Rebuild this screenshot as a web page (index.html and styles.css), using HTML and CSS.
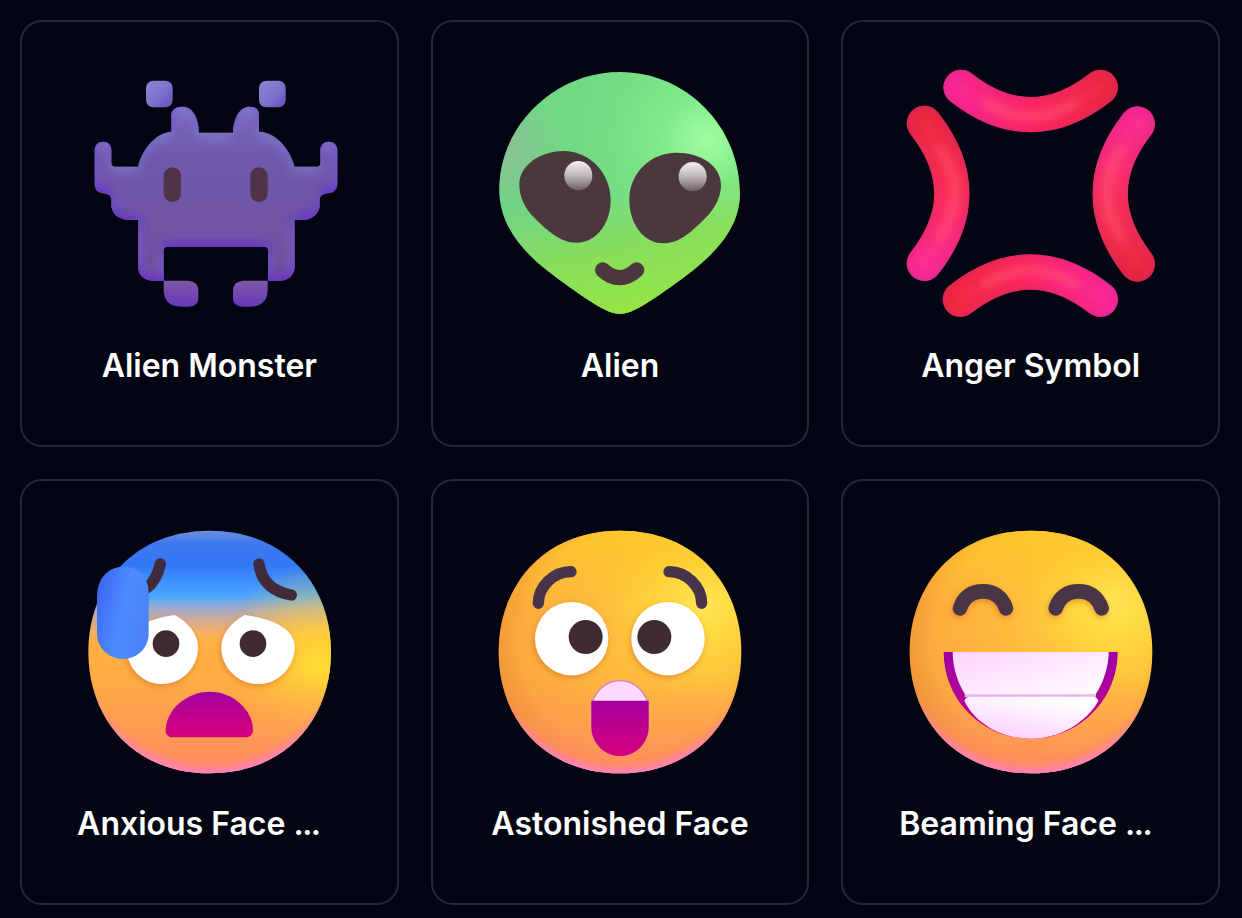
FILE: index.html
```html
<!DOCTYPE html>
<html lang="en">
<head>
<meta charset="utf-8">
<title>Emoji</title>
<link rel="stylesheet" href="styles.css">
</head>
<body>
<svg class="defs" aria-hidden="true">
  <defs>
    <path id="face" d="M16 30C24.7 30 30 23.8 30 16C30 8.2 24.7 2 16 2C7.3 2 2 8.2 2 16C2 23.8 7.3 30 16 30Z"/>
    <path id="alienShape" d="M600 216C800 216 960 380 960 580C960 700 860 785 760 855C700 897 640 942 600 942C560 942 500 897 440 855C340 785 238 700 238 570C238 380 400 216 600 216Z"/>
    <radialGradient id="faceBase" cx="0.84" cy="0.27" r="1">
      <stop offset="0" stop-color="#ffe95c"/><stop offset="0.16" stop-color="#ffd93f"/><stop offset="0.42" stop-color="#ffbc3d"/><stop offset="0.8" stop-color="#fbaa3e"/><stop offset="1" stop-color="#f39a40"/>
    </radialGradient>
    <linearGradient id="faceTop" x1="0" y1="0" x2="0" y2="1">
      <stop offset="0" stop-color="#ffc92b" stop-opacity="0.95"/><stop offset="0.32" stop-color="#ffc52c" stop-opacity="0"/>
    </linearGradient>
    <linearGradient id="faceLow" x1="0" y1="0.6" x2="0" y2="1">
      <stop offset="0" stop-color="#ff8f5c" stop-opacity="0"/><stop offset="1" stop-color="#ff8668" stop-opacity="0.85"/>
    </linearGradient>
    <radialGradient id="facePink" cx="0.5" cy="0.42" r="0.59">
      <stop offset="0.9" stop-color="#ff7e9e" stop-opacity="0"/><stop offset="1" stop-color="#ff7fe0"/>
    </radialGradient>
    <radialGradient id="faceEdge" cx="0.54" cy="0.46" r="0.56">
      <stop offset="0.8" stop-color="#e88a2c" stop-opacity="0"/><stop offset="1" stop-color="#e88a2c" stop-opacity="0.45"/>
    </radialGradient>
    <linearGradient id="anxBase" x1="0" y1="0" x2="0" y2="1">
      <stop offset="0" stop-color="#6e8fe0"/><stop offset="0.05" stop-color="#3f78ee"/><stop offset="0.14" stop-color="#3477f6"/><stop offset="0.22" stop-color="#3f95ff"/><stop offset="0.27" stop-color="#4aa6ff"/><stop offset="0.32" stop-color="#9fa9cd"/><stop offset="0.37" stop-color="#d2ab96"/><stop offset="0.42" stop-color="#f8ae62"/><stop offset="0.46" stop-color="#ffb043"/><stop offset="1" stop-color="#ffa548"/>
    </linearGradient>
    <radialGradient id="anxGlow" cx="0.95" cy="0.55" r="0.42">
      <stop offset="0" stop-color="#ffde33"/><stop offset="1" stop-color="#ffc53a" stop-opacity="0"/>
    </radialGradient>
    <linearGradient id="mouthPurple" x1="0" y1="0" x2="0" y2="1">
      <stop offset="0" stop-color="#a3009f"/><stop offset="1" stop-color="#d6007c"/>
    </linearGradient>
    <linearGradient id="mouthWide" x1="0" y1="0" x2="0" y2="1">
      <stop offset="0" stop-color="#9c00a4"/><stop offset="0.6" stop-color="#b40098"/><stop offset="1" stop-color="#d6007c"/>
    </linearGradient>
    <linearGradient id="tooth" x1="0" y1="0" x2="1" y2="1">
      <stop offset="0" stop-color="#ffd3ff"/><stop offset="1" stop-color="#ffffff"/>
    </linearGradient>
    <linearGradient id="toothLow" x1="0" y1="1" x2="0.6" y2="0">
      <stop offset="0" stop-color="#fbcbff"/><stop offset="1" stop-color="#ffffff"/>
    </linearGradient>
    <linearGradient id="drop" x1="0" y1="0" x2="1" y2="0.4">
      <stop offset="0" stop-color="#3c60ee"/><stop offset="0.6" stop-color="#4c8cff"/><stop offset="1" stop-color="#4b84f8"/>
    </linearGradient>
    <linearGradient id="monster" x1="0" y1="0" x2="0" y2="1">
      <stop offset="0" stop-color="#7c6cc0"/><stop offset="0.3" stop-color="#7058ac"/><stop offset="1" stop-color="#70529f"/>
    </linearGradient>
    <linearGradient id="monsterBit" x1="0" y1="0" x2="1" y2="1">
      <stop offset="0" stop-color="#8a86d4"/><stop offset="0.55" stop-color="#7c72cc"/><stop offset="1" stop-color="#6c4ac0"/>
    </linearGradient>
    <linearGradient id="monsterFoot" x1="0" y1="0" x2="0" y2="1">
      <stop offset="0" stop-color="#7c5aa8"/><stop offset="1" stop-color="#6a36b8"/>
    </linearGradient>
    <radialGradient id="alienBase" gradientUnits="userSpaceOnUse" cx="860" cy="420" r="640">
      <stop offset="0" stop-color="#a0fe9f"/><stop offset="0.22" stop-color="#80e989"/><stop offset="0.6" stop-color="#70d984"/><stop offset="1" stop-color="#72d484"/>
    </radialGradient>
    <linearGradient id="alienChin" x1="0.55" y1="1" x2="0.45" y2="0.5">
      <stop offset="0" stop-color="#96e645"/><stop offset="0.5" stop-color="#8fe04e" stop-opacity="0.8"/><stop offset="1" stop-color="#8fdc58" stop-opacity="0"/>
    </linearGradient>
    <radialGradient id="alienLeft" gradientUnits="userSpaceOnUse" cx="255" cy="450" r="170">
      <stop offset="0" stop-color="#8cbf96" stop-opacity="0.95"/><stop offset="1" stop-color="#8cbf96" stop-opacity="0"/>
    </radialGradient>
    <linearGradient id="gloss" x1="0" y1="0" x2="0" y2="1">
      <stop offset="0" stop-color="#f4f0f2"/><stop offset="0.5" stop-color="#bdb5ba"/><stop offset="1" stop-color="#6c5f64"/>
    </linearGradient>
    <linearGradient id="angerTop" gradientUnits="userSpaceOnUse" x1="340" y1="0" x2="865" y2="0">
      <stop offset="0" stop-color="#f92c9c"/><stop offset="0.55" stop-color="#fb2c5f"/><stop offset="1" stop-color="#e92a3c"/>
    </linearGradient>
    <linearGradient id="angerBottom" gradientUnits="userSpaceOnUse" x1="340" y1="0" x2="865" y2="0">
      <stop offset="0" stop-color="#ee2a3c"/><stop offset="0.45" stop-color="#fb2c5f"/><stop offset="1" stop-color="#fb2ca0"/>
    </linearGradient>
    <linearGradient id="angerLeft" gradientUnits="userSpaceOnUse" x1="0" y1="318" x2="0" y2="842">
      <stop offset="0" stop-color="#e82a3c"/><stop offset="0.5" stop-color="#fa3058"/><stop offset="1" stop-color="#fb2ca0"/>
    </linearGradient>
    <linearGradient id="angerRight" gradientUnits="userSpaceOnUse" x1="0" y1="318" x2="0" y2="842">
      <stop offset="0" stop-color="#f92c9c"/><stop offset="0.5" stop-color="#fa3260"/><stop offset="1" stop-color="#e82a3c"/>
    </linearGradient>
    <filter id="bodyShade" x="-10%" y="-10%" width="120%" height="120%">
      <feGaussianBlur in="SourceAlpha" stdDeviation="16" result="b1"/>
      <feOffset in="b1" dy="-14" result="o1"/>
      <feComposite in="SourceAlpha" in2="o1" operator="out" result="i1"/>
      <feFlood flood-color="#6a2cc8"/>
      <feComposite in2="i1" operator="in" result="bottom"/>
      <feOffset in="b1" dx="-4" dy="14" result="o2"/>
      <feComposite in="SourceAlpha" in2="o2" operator="out" result="i2"/>
      <feFlood flood-color="#8484d0" flood-opacity="0.7"/>
      <feComposite in2="i2" operator="in" result="top"/>
      <feMerge><feMergeNode in="SourceGraphic"/><feMergeNode in="top"/><feMergeNode in="bottom"/></feMerge>
      <feGaussianBlur stdDeviation="1.2"/>
    </filter>
    <filter id="tubeShade" filterUnits="userSpaceOnUse" x="180" y="170" width="840" height="820">
      <feGaussianBlur in="SourceAlpha" stdDeviation="14" result="b1"/>
      <feComposite in="SourceAlpha" in2="b1" operator="out" result="i1"/>
      <feFlood flood-color="#b81f6a" flood-opacity="0.6"/>
      <feComposite in2="i1" operator="in" result="edge"/>
      <feMerge><feMergeNode in="SourceGraphic"/><feMergeNode in="edge"/></feMerge>
    </filter>
    <filter id="soft" filterUnits="userSpaceOnUse" x="180" y="170" width="840" height="820"><feGaussianBlur stdDeviation="9"/></filter>
    <filter id="under" filterUnits="userSpaceOnUse" x="200" y="200" width="840" height="760">
      <feDropShadow dx="-3" dy="7" stdDeviation="10" flood-color="#c86a1e" flood-opacity="0.55"/>
    </filter>
  </defs>
</svg>
<main class="grid">
  <article class="card">
    <svg class="icon" viewBox="238 183 780 780" role="img" aria-label="Alien Monster">
      <rect x="439" y="242" width="80" height="80" rx="22" fill="url(#monsterBit)"/>
      <rect x="778" y="242" width="80" height="80" rx="22" fill="url(#monsterBit)"/>
      <path filter="url(#bodyShade)" fill="url(#monster)" d="M285 450C285 435 296 425 310 425C325 425 335 435 335 450L335 488Q335 500 347 500L415 500C428 445 470 398 515 395L515 345C515 330 528 320 548 320C578 320 596 350 598 398L700 398C702 350 722 320 750 320C770 320 778 330 778 345L778 395C830 398 870 445 885 500L950 500Q962 500 962 488L962 450C962 435 973 425 987 425C1002 425 1013 435 1013 450L1013 550C1013 570 1000 580 985 580Q960 582 960 600L960 620C955 645 935 660 905 660L885 660L885 800C885 825 865 842 840 842L805 842L805 752Q805 740 793 740L505 740Q492 740 492 752L492 842L460 842C435 842 415 825 415 800L415 660L395 660C360 660 340 645 335 620L335 600Q335 582 310 580C295 578 285 570 285 550Z"/>
      <rect x="492" y="502" width="52" height="104" rx="26" fill="#503348"/>
      <rect x="752" y="502" width="52" height="104" rx="26" fill="#503348"/>
      <path fill="url(#monsterFoot)" d="M492 842L565 842Q596 844 596 872L596 895Q596 920 568 920L545 920Q492 920 492 868Z"/>
      <path fill="url(#monsterFoot)" d="M804 842L731 842Q700 844 700 872L700 895Q700 920 728 920L751 920Q804 920 804 868Z"/>
    </svg>
    <h2 class="name">Alien Monster</h2>
  </article>
  <article class="card">
    <svg class="icon" viewBox="210 183 780 780" role="img" aria-label="Alien">
      <use href="#alienShape" fill="url(#alienBase)"/>
      <use href="#alienShape" fill="url(#alienChin)"/>
      <use href="#alienShape" fill="url(#alienLeft)"/>
      <path fill="#4a383c" d="M298 555C298 490 370 453 430 453C510 453 572 520 572 600C572 670 530 728 470 728C420 728 380 690 340 650C315 625 298 590 298 555Z"/>
      <path fill="#4a383c" d="M903 555C903 495 840 458 770 458C690 458 628 520 628 600C628 670 670 730 730 730C780 730 820 690 860 650C885 625 903 590 903 555Z"/>
      <ellipse cx="475" cy="527" rx="42" ry="44" fill="url(#gloss)"/>
      <ellipse cx="818" cy="530" rx="42" ry="44" fill="url(#gloss)"/>
      <path fill="none" stroke="#4a383c" stroke-width="46" stroke-linecap="round" d="M548 810Q598 856 650 810"/>
    </svg>
    <h2 class="name">Alien</h2>
  </article>
  <article class="card">
    <svg class="icon" viewBox="212 183 780 780" role="img" aria-label="Anger Symbol">
      <g fill="none" stroke-width="106" stroke-linecap="round" filter="url(#tubeShade)">
        <path stroke="url(#angerTop)" d="M392 262Q600 426 810 262"/>
        <path stroke="url(#angerBottom)" d="M390 898Q600 734 810 898"/>
        <path stroke="url(#angerLeft)" d="M282 370Q447 581 282 790"/>
        <path stroke="url(#angerRight)" d="M921 372Q758 581 921 792"/>
      </g>
      <g fill="none" stroke-width="34" stroke-linecap="round" stroke="#ff5c74" opacity="0.35" filter="url(#soft)">
        <path d="M470 310Q600 390 730 310"/>
        <path d="M470 850Q600 770 730 850"/>
        <path d="M330 450Q420 581 330 710"/>
        <path d="M872 450Q780 581 872 710"/>
      </g>
    </svg>
    <h2 class="name">Anger Symbol</h2>
  </article>
  <article class="card">
    <svg class="icon" viewBox="238 180 780 780" role="img" aria-label="Anxious Face">
      <g transform="translate(214 160) scale(26)">
        <use href="#face" fill="url(#anxBase)"/>
        <use href="#face" fill="url(#anxGlow)"/>
        <use href="#face" fill="url(#faceLow)"/>
        <use href="#face" fill="url(#facePink)"/>
      </g>
      <path fill="none" stroke="#402b3a" stroke-width="34" stroke-linecap="round" d="M482 312C475 345 460 370 440 385"/>
      <path fill="none" stroke="#402b3a" stroke-width="34" stroke-linecap="round" d="M778 312C785 365 820 395 875 405"/>
      <g filter="url(#under)">
        <path fill="#fff" d="M380 560C380 520 420 480 525 465C570 490 595 525 595 562C595 622 547 672 487 672C428 672 380 622 380 560Z"/>
        <path fill="#fff" d="M885 560C885 520 845 480 735 465C690 490 665 525 665 562C665 622 713 672 775 672C835 672 885 622 885 560Z"/>
      </g>
      <circle cx="499" cy="551" r="40" fill="#402b30"/>
      <circle cx="760" cy="551" r="40" fill="#402b30"/>
      <path fill="url(#mouthPurple)" d="M498 812C498 750 560 695 630 695C700 695 760 750 760 810C760 824 750 832 738 832L520 832C506 832 498 824 498 812Z"/>
      <path fill="url(#drop)" d="M292 410C292 355 325 320 372 320C415 320 447 350 447 400L447 520C447 565 412 597 370 597C328 597 292 565 292 520Z"/>
    </svg>
    <h2 class="name name-clip-long">Anxious Face <span class="dots">...</span></h2>
  </article>
  <article class="card">
    <svg class="icon" viewBox="210 180 780 780" role="img" aria-label="Astonished Face">
      <g transform="translate(184 160) scale(26)">
        <use href="#face" fill="url(#faceBase)"/>
        <use href="#face" fill="url(#faceTop)"/>
        <use href="#face" fill="url(#faceEdge)"/>
        <use href="#face" fill="url(#faceLow)"/>
        <use href="#face" fill="url(#facePink)"/>
      </g>
      <path fill="none" stroke="#48344a" stroke-width="34" stroke-linecap="round" d="M355 430C355 380 400 335 453 335"/>
      <path fill="none" stroke="#48344a" stroke-width="34" stroke-linecap="round" d="M845 430C845 380 800 335 747 335"/>
      <g filter="url(#under)">
        <circle cx="455" cy="536" r="110" fill="#fff"/>
        <circle cx="744" cy="536" r="110" fill="#fff"/>
      </g>
      <circle cx="497" cy="531" r="51" fill="#402b30"/>
      <circle cx="703" cy="531" r="51" fill="#402b30"/>
      <path fill="#ffd9ff" stroke="#cf7fd8" stroke-width="4" d="M516 745C516 700 556 662 600 662C644 662 684 700 684 745L684 800C684 848 648 886 600 886C552 886 516 848 516 800Z"/>
      <path fill="url(#mouthPurple)" d="M514 722L686 722L686 800C686 848 648 888 600 888C552 888 514 848 514 800Z"/>
    </svg>
    <h2 class="name">Astonished Face</h2>
  </article>
  <article class="card">
    <svg class="icon" viewBox="212 180 780 780" role="img" aria-label="Beaming Face">
      <g transform="translate(186 160) scale(26)">
        <use href="#face" fill="url(#faceBase)"/>
        <use href="#face" fill="url(#faceTop)"/>
        <use href="#face" fill="url(#faceEdge)"/>
        <use href="#face" fill="url(#faceLow)"/>
        <use href="#face" fill="url(#facePink)"/>
      </g>
      <g filter="url(#under)">
        <path fill="none" stroke="#4a3545" stroke-width="44" stroke-linecap="round" d="M389 445C400 410 425 394 458 394C490 394 515 410 527 445"/>
        <path fill="none" stroke="#4a3545" stroke-width="44" stroke-linecap="round" d="M676 445C687 410 712 394 745 394C777 394 802 410 814 445"/>
      </g>
      <path fill="url(#mouthWide)" d="M340 576L862 576C862 720 745 836 600 836C455 836 340 720 340 576Z"/>
      <path fill="url(#tooth)" d="M367 576L835 576C835 620 820 665 795 705L405 705C380 665 367 620 367 576Z"/>
      <path fill="#eab4ee" d="M403 703L797 703L797 712L403 712Z"/>
      <path fill="url(#toothLow)" d="M402 722C404 714 412 710 420 710L785 710C795 710 802 714 804 722C770 785 690 836 600 836C510 836 430 785 402 722Z"/>
    </svg>
    <h2 class="name name-clip-short">Beaming Face <span class="dots">...</span></h2>
  </article>
</main>
</body>
</html>
```

FILE: styles.css
```css
html, body {
  margin: 0;
  background: #030612;
}

.defs {
  position: absolute;
  width: 0;
  height: 0;
}

.grid {
  display: grid;
  grid-template-columns: repeat(3, minmax(0, 1fr));
  gap: 32px;
  padding: 20px 22px 0 20px;
}

.card {
  box-sizing: border-box;
  height: 426.7px;
  padding-top: 39px;
  display: flex;
  flex-direction: column;
  align-items: center;
  border: 2px solid #222a39;
  border-radius: 22px;
}

.icon {
  display: block;
  width: 260px;
  height: 260px;
  flex: none;
}

.name {
  margin: 26.6px 0 0;
  color: #fff;
  font-family: Inter, "Liberation Sans", sans-serif;
  font-size: 32px;
  font-weight: 600;
  line-height: 36px;
  white-space: nowrap;
}

.name-clip-long {
  padding-right: 22px;
}

.name-clip-short {
  padding-right: 11px;
}

.dots {
  letter-spacing: -1.5px;
}
```
